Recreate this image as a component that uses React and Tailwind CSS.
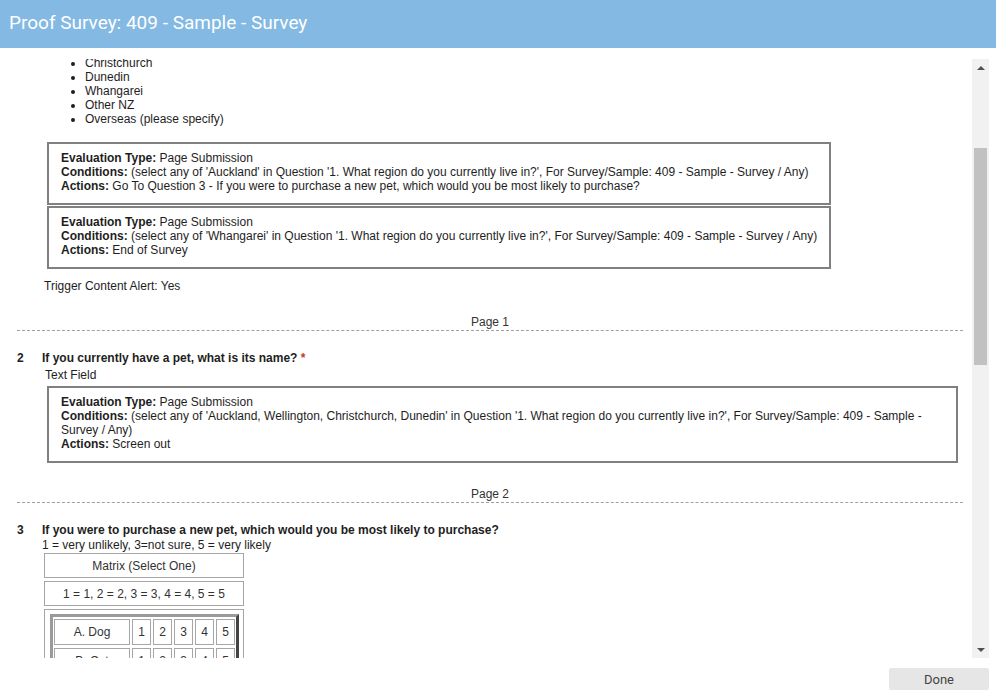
import React from 'react';

const regions = ['Christchurch', 'Dunedin', 'Whangarei', 'Other NZ', 'Overseas (please specify)'];
const pets = ['A. Dog', 'B. Cat', 'C. Fish', 'D. Bird', 'E. Other'];

const EvalBox = ({ type, conditions, actions }) => (
  <div className="border-2 border-[#808080] pt-[7px] pb-[10px] px-[12px]">
    <div><span className="font-bold">Evaluation Type:</span> {type}</div>
    <div><span className="font-bold">Conditions:</span> {conditions}</div>
    <div><span className="font-bold">Actions:</span> {actions}</div>
  </div>
);

const PageDivider = ({ label, className }) => (
  <div className={className}>
    <div className="text-center text-[#333]">{label}</div>
    <div className="mt-[1px] border-b border-dashed border-[#a0a0a0]" />
  </div>
);

const Question = ({ num, children, className }) => (
  <div className={'flex ' + (className || '')}>
    <div className="w-[25px] shrink-0 font-bold">{num}</div>
    <div className="flex-1 min-w-0">{children}</div>
  </div>
);

const Cell = ({ children, className }) => (
  <div className={'h-[26px] border border-[#a6a6a6] flex items-center justify-center text-[#333] ' + className}>
    {children}
  </div>
);

const Scrollbar = () => (
  <div className="w-[17px] shrink-0 bg-[#f1f1f1] flex flex-col items-center">
    <div className="h-[17px] flex items-center justify-center">
      <div className="w-0 h-0 border-l-[4px] border-r-[4px] border-b-[4px] border-l-transparent border-r-transparent border-b-[#505050]" />
    </div>
    <div className="mt-[72px] w-[13px] h-[217px] bg-[#c1c1c1]" />
    <div className="mt-auto h-[17px] flex items-center justify-center">
      <div className="w-0 h-0 border-l-[4px] border-r-[4px] border-t-[4px] border-l-transparent border-r-transparent border-t-[#505050]" />
    </div>
  </div>
);

export default function App() {
  return (
    <div className="w-full h-[700px] bg-white flex flex-col overflow-hidden" style={{ fontFamily: '"Liberation Sans", Arial, sans-serif' }}>
      <div className="h-[48px] shrink-0 bg-[#83b9e3] flex items-center pl-[9px] pb-[1px]">
        <h1 className="text-[19px] text-white font-normal" style={{ fontFamily: 'Roboto, sans-serif' }}>
          Proof Survey: 409 - Sample - Survey
        </h1>
      </div>

      <div className="mt-[11px] h-[599px] shrink-0 flex">
        <div className="flex-1 overflow-hidden">
          <div className="-mt-[3px] pl-[17px] pr-[9px] text-[12px] leading-[14px] text-[#1e1e1e]">
            <Question num="">
              <ul className="list-disc pl-[43px]">
                {regions.map(r => <li key={r}>{r}</li>)}
              </ul>
              <div className="mt-[16px] ml-[5px] w-fit flex flex-col gap-[1px]">
                <EvalBox
                  type="Page Submission"
                  conditions="(select any of 'Auckland' in Question '1. What region do you currently live in?', For Survey/Sample: 409 - Sample - Survey / Any)"
                  actions="Go To Question 3 - If you were to purchase a new pet, which would you be most likely to purchase?"
                />
                <EvalBox
                  type="Page Submission"
                  conditions="(select any of 'Whangarei' in Question '1. What region do you currently live in?', For Survey/Sample: 409 - Sample - Survey / Any)"
                  actions="End of Survey"
                />
              </div>
              <div className="mt-[10px] ml-[2px]">Trigger Content Alert: Yes</div>
            </Question>

            <PageDivider label="Page 1" className="mt-[22px]" />

            <Question num="2" className="mt-[20px]">
              <div className="font-bold">
                If you currently have a pet, what is its name? <span className="text-[#c0392b]">*</span>
              </div>
              <div className="mt-[3px] ml-[3px]">Text Field</div>
              <div className="mt-[4px] mx-[5px] w-fit">
                <EvalBox
                  type="Page Submission"
                  conditions="(select any of 'Auckland, Wellington, Christchurch, Dunedin' in Question '1. What region do you currently live in?', For Survey/Sample: 409 - Sample - Survey / Any)"
                  actions="Screen out"
                />
              </div>
            </Question>

            <PageDivider label="Page 2" className="mt-[24px]" />

            <Question num="3" className="mt-[20px]">
              <div className="font-bold">If you were to purchase a new pet, which would you be most likely to purchase?</div>
              <div className="mt-[1px]">1 = very unlikely, 3=not sure, 5 = very likely</div>
              <div className="mt-[1px] ml-[2px] w-[200px] flex flex-col gap-[3px]">
                <div className="h-[25px] border border-[#a6a6a6] flex items-center justify-center text-[#333]">Matrix (Select One)</div>
                <div className="h-[25px] border border-[#a6a6a6] flex items-center justify-center text-[#333]">1 = 1, 2 = 2, 3 = 3, 4 = 4, 5 = 5</div>
                <div className="border border-[#a6a6a6] pt-[4px] pb-[4px] pl-[5px]">
                  <div className="w-fit border-[3px] border-t-[#9a9a9a] border-l-[#9a9a9a] border-r-[#444] border-b-[#444] pt-[2px] px-[1px] pb-[2px] flex flex-col gap-[3px]">
                    {pets.map(p => (
                      <div key={p} className="flex gap-[2px]">
                        <Cell className="w-[76px]">{p}</Cell>
                        {[1, 2, 3, 4, 5].map(n => <Cell key={n} className="w-[19px]">{n}</Cell>)}
                      </div>
                    ))}
                  </div>
                </div>
              </div>
            </Question>
          </div>
        </div>
        <Scrollbar />
        <div className="w-[7px] shrink-0" />
      </div>

      <div className="flex justify-end pr-[7px] pt-[10px]">
        <button
          type="button"
          className="w-[100px] h-[22px] pt-[1px] bg-[#e6e6e6] rounded-[2px] text-[13px] text-[#444]"
          style={{ fontFamily: 'Roboto, sans-serif' }}
        >
          Done
        </button>
      </div>
    </div>
  );
}
